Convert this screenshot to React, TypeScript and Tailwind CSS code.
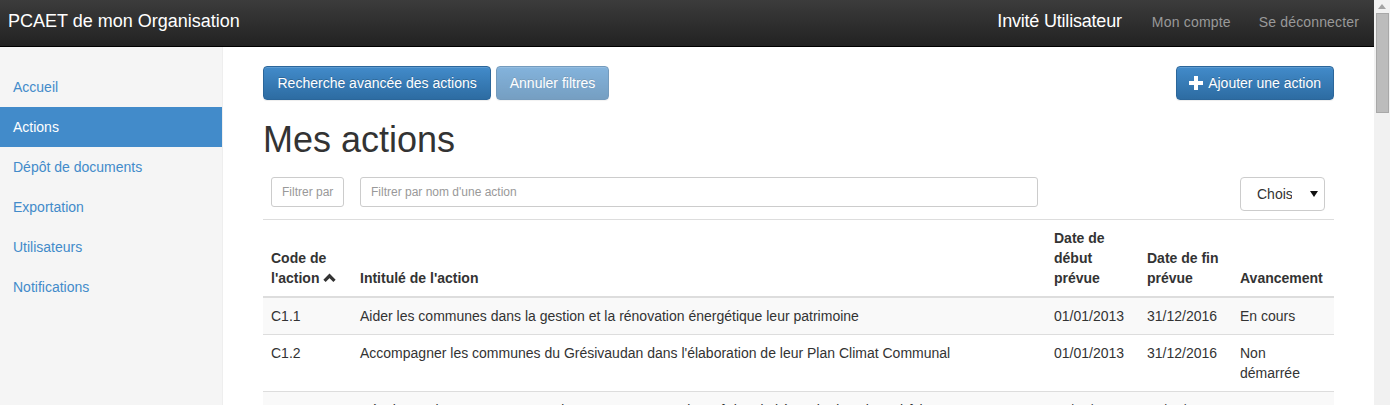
import React from 'react';

const navItems = ['Accueil', 'Actions', 'Dépôt de documents', 'Exportation', 'Utilisateurs', 'Notifications'];

const rows = [
  ['C1.1', 'Aider les communes dans la gestion et la rénovation énergétique leur patrimoine', '01/01/2013', '31/12/2016', 'En cours'],
  ['C1.2', "Accompagner les communes du Grésivaudan dans l'élaboration de leur Plan Climat Communal", '01/01/2013', '31/12/2016', 'Non démarrée'],
  ['C1.3', "Développer l'accompagnement des communes pour la maîtrise de l'énergie dans leurs bâtiments", '01/01/2014', '31/12/2016', 'En cours'],
];

const btn =
  'rounded-[4px] border border-[#2b669a] bg-linear-to-b from-[#428bca] to-[#2d6ca2] py-[6px] text-sm leading-5 text-white [text-shadow:0_-1px_0_rgba(0,0,0,0.2)] shadow-[inset_0_1px_0_rgba(255,255,255,0.15),0_1px_1px_rgba(0,0,0,0.075)]';

const App = () => {
  return (
    <div className="flex h-[405px] w-[1390px] overflow-hidden bg-white font-['Liberation_Sans',Arial,sans-serif] text-sm text-[#333]">
      <div className="flex min-w-0 flex-1 flex-col">
        {/* navbar */}
        <div className="flex h-[47px] shrink-0 items-baseline border-b border-black bg-linear-to-b from-[#3c3c3c] to-[#222] pt-[11px]">
          <span className="pl-2 text-lg leading-5 text-white">PCAET de mon Organisation</span>
          <span className="ml-auto text-lg leading-5 tracking-[-0.2px] text-white">Invité Utilisateur</span>
          <span className="ml-[30px] leading-5 tracking-[0.2px] text-[#999]">Mon compte</span>
          <span className="ml-[28px] mr-[15px] leading-5 tracking-[0.15px] text-[#999]">Se déconnecter</span>
        </div>

        <div className="flex min-h-0 flex-1">
          {/* sidebar */}
          <div className="w-[223px] shrink-0 border-r border-[#eee] bg-[#f5f5f5] pt-5">
            {navItems.map((item) => (
              <div
                key={item}
                className={
                  item === 'Actions'
                    ? 'bg-[#428bca] py-[10px] pl-[13px] leading-5 text-white'
                    : 'py-[10px] pl-[13px] leading-5 text-[#428bca]'
                }
              >
                {item}
              </div>
            ))}
          </div>

          {/* main */}
          <div className="min-w-0 flex-1 px-10 pt-[19px]">
            <div className="flex items-start">
              <button className={`${btn} px-[13.5px]`}>Recherche avancée des actions</button>
              <button className={`${btn} ml-[5px] px-[12.5px] opacity-65`}>Annuler filtres</button>
              <button className={`${btn} ml-auto flex items-center gap-[5px] px-3`}>
                <svg width="14" height="14" viewBox="0 0 14 14">
                  <path d="M5 0h4v5h5v4H9v5H5V9H0V5h5z" fill="white" />
                </svg>
                Ajouter une action
              </button>
            </div>

            <h1 className="mt-5 mb-[9px] text-[36px] leading-[1.1] font-medium">Mes actions</h1>

            <table className="w-full table-fixed border-collapse">
              <colgroup>
                <col className="w-[89px]" />
                <col />
                <col className="w-[93px]" />
                <col className="w-[93px]" />
                <col className="w-[102px]" />
              </colgroup>
              <thead>
                <tr>
                  <td className="p-2 align-top">
                    <div className="h-[30px] overflow-hidden rounded-[3px] border border-[#ccc] px-[10px] text-xs leading-[28px] whitespace-nowrap text-[#999]">
                      Filtrer par
                    </div>
                  </td>
                  <td className="p-2 align-top">
                    <div className="h-[30px] rounded-[3px] border border-[#ccc] px-[10px] text-xs leading-[28px] text-[#999]">
                      Filtrer par nom d'une action
                    </div>
                  </td>
                  <td className="p-2" />
                  <td className="p-2" />
                  <td className="p-2 pr-[9px] align-top">
                    <div className="flex h-[34px] items-center rounded-[4px] border border-[#ccc] pr-[6px] pl-4">
                      <span className="w-[35px] overflow-hidden whitespace-nowrap leading-5">Choisir...</span>
                      <svg className="ml-auto" width="8" height="6" viewBox="0 0 8 6">
                        <path d="M0 0h8L4 6z" fill="#111" />
                      </svg>
                    </div>
                  </td>
                </tr>
                <tr className="border-t border-b-2 border-[#ddd] text-left align-bottom font-bold">
                  <th className="p-2 leading-5">
                    Code de l'action{' '}
                    <svg className="inline-block align-[1px]" width="13" height="9" viewBox="0 0 13 9">
                      <path d="M1.5 7.8L6.5 2.8l5 5" stroke="#333" strokeWidth="3.2" fill="none" />
                    </svg>
                  </th>
                  <th className="p-2 leading-5">Intitulé de l'action</th>
                  <th className="p-2 leading-5">Date de début prévue</th>
                  <th className="p-2 leading-5">Date de fin prévue</th>
                  <th className="p-2 leading-5">Avancement</th>
                </tr>
              </thead>
              <tbody>
                {rows.map((r, i) => (
                  <tr key={r[0]} className={i % 2 === 0 ? 'bg-[#f9f9f9]' : ''}>
                    {r.map((c, j) => (
                      <td key={j} className="border-t border-[#ddd] p-2 align-top leading-5">
                        {c}
                      </td>
                    ))}
                  </tr>
                ))}
              </tbody>
            </table>
          </div>
        </div>
      </div>

      {/* scrollbar */}
      <div className="flex w-[16px] shrink-0 flex-col items-center bg-[#f1f1f1]">
        <svg className="mt-[4px]" width="8" height="5" viewBox="0 0 8 5">
          <path d="M0 5L4 0l4 5z" fill="#a3a3a3" />
        </svg>
        <div className="mt-[4px] h-[100px] w-[13px] border border-[#a8a8a8] bg-[#bcbcbc]" />
      </div>
    </div>
  );
};

export default App;
